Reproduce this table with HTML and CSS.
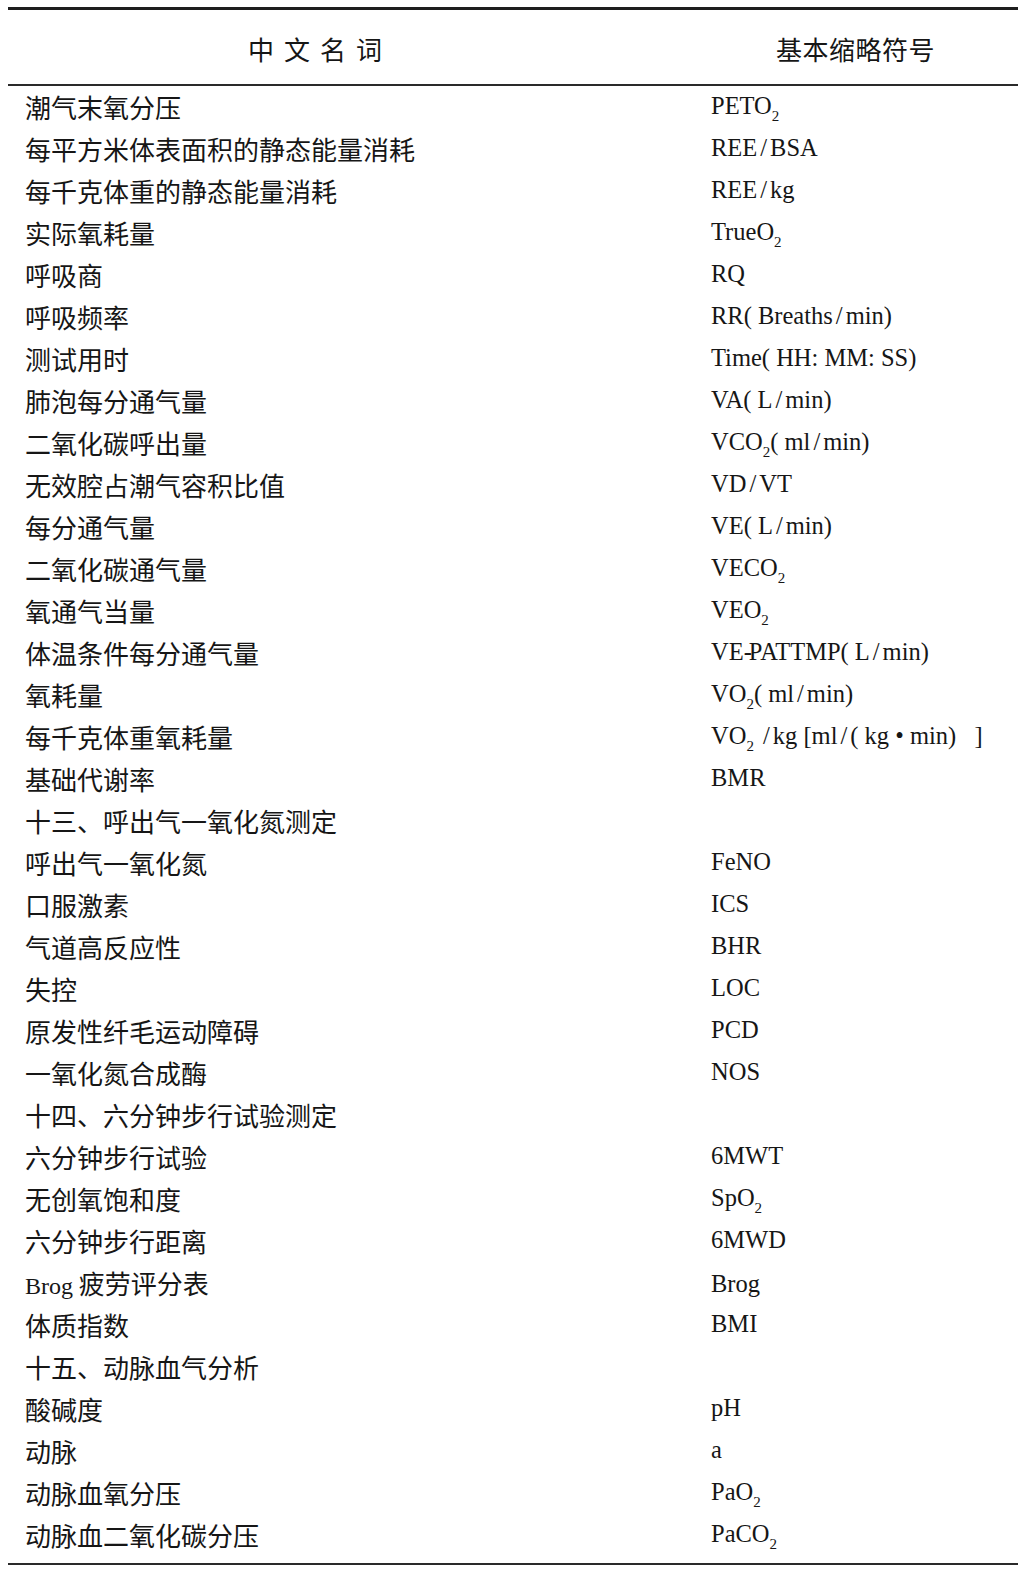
FILE: index.html
```html
<!DOCTYPE html>
<html lang="zh-CN">
<head>
<meta charset="utf-8">
<title>中文名词 基本缩略符号</title>
<link rel="stylesheet" href="styles.css">
</head>
<body>
<div class="sheet">
  <div class="head">
    <div class="h-cn">中文名词</div>
    <div class="h-ab">基本缩略符号</div>
  </div>
  <div class="rows">
    <div class="row"><div class="cn">潮气末氧分压</div><div class="ab">PETO<sub>2</sub></div></div>
    <div class="row"><div class="cn">每平方米体表面积的静态能量消耗</div><div class="ab">REE<span class="sl">/</span>BSA</div></div>
    <div class="row"><div class="cn">每千克体重的静态能量消耗</div><div class="ab">REE<span class="sl">/</span>kg</div></div>
    <div class="row"><div class="cn">实际氧耗量</div><div class="ab">TrueO<sub>2</sub></div></div>
    <div class="row"><div class="cn">呼吸商</div><div class="ab">RQ</div></div>
    <div class="row"><div class="cn">呼吸频率</div><div class="ab">RR( Breaths<span class="sl">/</span>min)</div></div>
    <div class="row"><div class="cn">测试用时</div><div class="ab">Time( HH: MM: SS)</div></div>
    <div class="row"><div class="cn">肺泡每分通气量</div><div class="ab">VA( L<span class="sl">/</span>min)</div></div>
    <div class="row"><div class="cn">二氧化碳呼出量</div><div class="ab">VCO<sub>2</sub>( ml<span class="sl">/</span>min)</div></div>
    <div class="row"><div class="cn">无效腔占潮气容积比值</div><div class="ab">VD<span class="sl">/</span>VT</div></div>
    <div class="row"><div class="cn">每分通气量</div><div class="ab">VE( L<span class="sl">/</span>min)</div></div>
    <div class="row"><div class="cn">二氧化碳通气量</div><div class="ab">VECO<sub>2</sub></div></div>
    <div class="row"><div class="cn">氧通气当量</div><div class="ab">VEO<sub>2</sub></div></div>
    <div class="row"><div class="cn">体温条件每分通气量</div><div class="ab">VE<span class="dash">-</span>PATTMP( L<span class="sl">/</span>min)</div></div>
    <div class="row"><div class="cn">氧耗量</div><div class="ab">VO<sub>2</sub>( ml<span class="sl">/</span>min)</div></div>
    <div class="row"><div class="cn">每千克体重氧耗量</div><div class="ab">VO<sub>2</sub> <span class="sl">/</span>kg [ml<span class="sl">/</span>( kg • min)&nbsp;&nbsp; ]</div></div>
    <div class="row"><div class="cn">基础代谢率</div><div class="ab">BMR</div></div>
    <div class="row"><div class="cn">十三、呼出气一氧化氮测定</div><div class="ab"></div></div>
    <div class="row"><div class="cn">呼出气一氧化氮</div><div class="ab">FeNO</div></div>
    <div class="row"><div class="cn">口服激素</div><div class="ab">ICS</div></div>
    <div class="row"><div class="cn">气道高反应性</div><div class="ab">BHR</div></div>
    <div class="row"><div class="cn">失控</div><div class="ab">LOC</div></div>
    <div class="row"><div class="cn">原发性纤毛运动障碍</div><div class="ab">PCD</div></div>
    <div class="row"><div class="cn">一氧化氮合成酶</div><div class="ab">NOS</div></div>
    <div class="row"><div class="cn">十四、六分钟步行试验测定</div><div class="ab"></div></div>
    <div class="row"><div class="cn">六分钟步行试验</div><div class="ab">6MWT</div></div>
    <div class="row"><div class="cn">无创氧饱和度</div><div class="ab">SpO<sub>2</sub></div></div>
    <div class="row"><div class="cn">六分钟步行距离</div><div class="ab">6MWD</div></div>
    <div class="row"><div class="cn"><span class="lat">Brog</span> 疲劳评分表</div><div class="ab">Brog</div></div>
    <div class="row"><div class="cn">体质指数</div><div class="ab">BMI</div></div>
    <div class="row"><div class="cn">十五、动脉血气分析</div><div class="ab"></div></div>
    <div class="row"><div class="cn">酸碱度</div><div class="ab">pH</div></div>
    <div class="row"><div class="cn">动脉</div><div class="ab">a</div></div>
    <div class="row"><div class="cn">动脉血氧分压</div><div class="ab">PaO<sub>2</sub></div></div>
    <div class="row"><div class="cn">动脉血二氧化碳分压</div><div class="ab">PaCO<sub>2</sub></div></div>
  </div>
</div>
</body>
</html>
```
FILE: styles.css
```css
html, body {
  margin: 0;
  padding: 0;
  background: #ffffff;
}

body {
  color: #161616;
  font-family: "Liberation Serif", "Noto Sans CJK SC", serif;
}

.sheet {
  width: 1010px;
  margin: 7px 0 0 8px;
  border-top: 3px solid #1e1e1e;
  border-bottom: 2px solid #2a2a2a;
}

.head {
  display: grid;
  grid-template-columns: 700px 1fr;
  align-items: center;
  height: 76px;
  border-bottom: 2px solid #2a2a2a;
  font-family: "Noto Sans CJK SC", sans-serif;
  font-size: 26px;
  padding-top: 2px;
  box-sizing: border-box;
}

.h-cn {
  padding-left: 240px;
  letter-spacing: 10px;
}

.h-ab {
  padding-left: 68px;
  letter-spacing: 0.5px;
}

.rows {
  padding-bottom: 7px;
}

.row {
  display: grid;
  grid-template-columns: 700px 1fr;
  align-items: center;
  height: 42px;
}

.cn {
  padding-left: 17px;
  font-family: "Noto Sans CJK SC", sans-serif;
  font-size: 26px;
  line-height: 42px;
  white-space: nowrap;
}

.cn .lat {
  font-family: "Liberation Serif", serif;
  font-size: 24px;
}

.ab {
  padding-left: 3px;
  font-family: "Liberation Serif", serif;
  font-size: 24.5px;
  line-height: 40px;
  padding-bottom: 2px;
  white-space: nowrap;
}

.ab sub {
  font-size: 15px;
  vertical-align: -7px;
  line-height: 0;
}

.sl {
  margin: 0 3px;
}

.dash {
  margin-right: -3px;
}
```
